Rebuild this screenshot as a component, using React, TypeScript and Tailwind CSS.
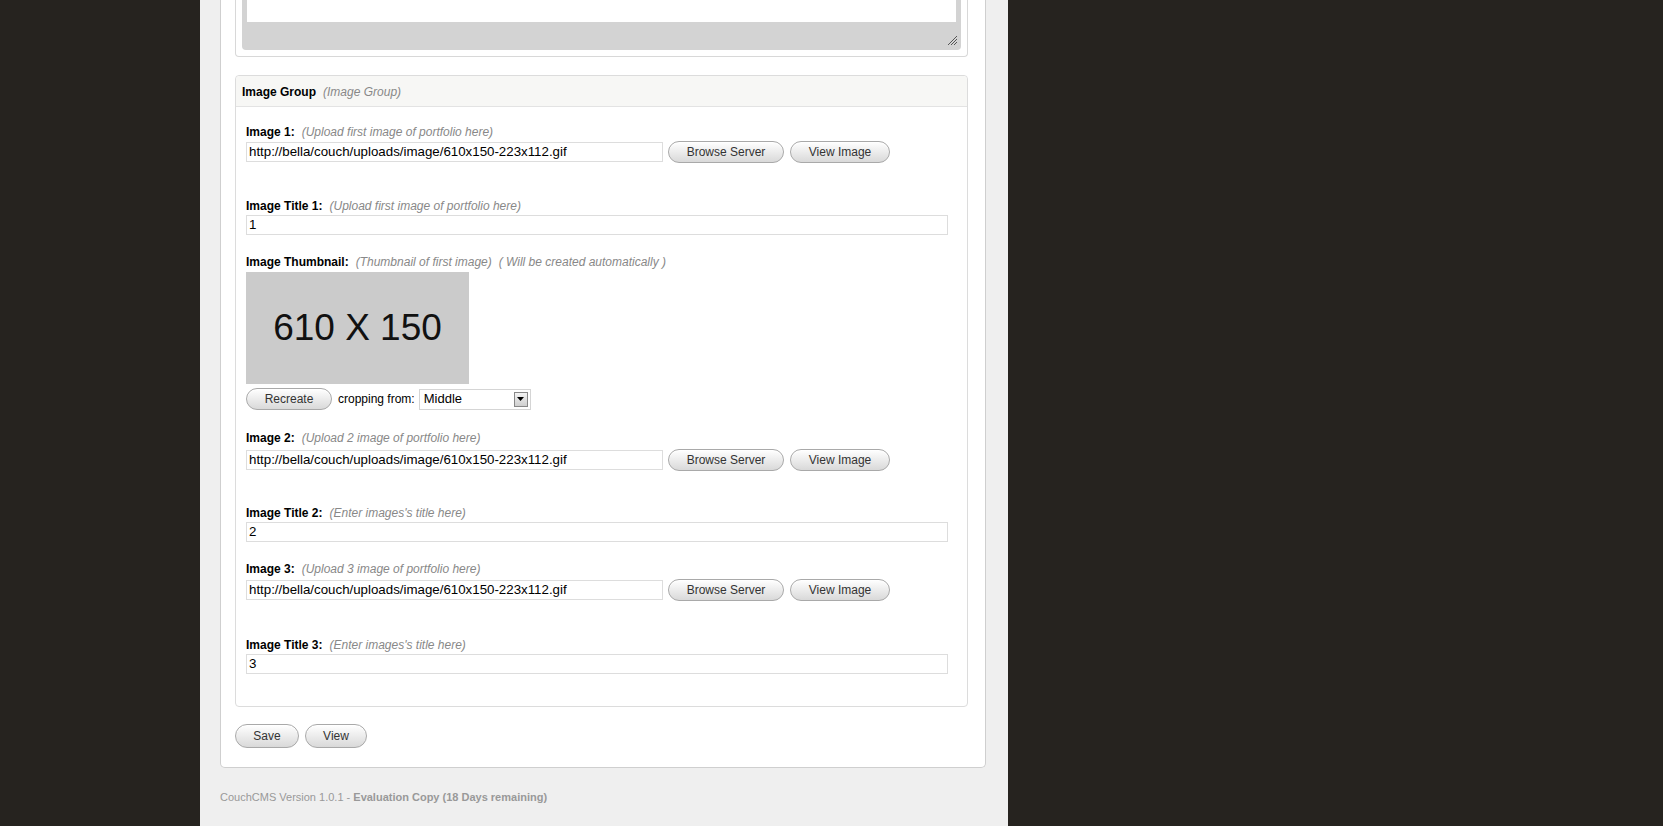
import React from 'react'

const URL_VALUE = 'http://bella/couch/uploads/image/610x150-223x112.gif'

function Btn({ label, w, h = 'h-[22px]' }: { label: string; w: string; h?: string }) {
  return (
    <button
      className={`${w} ${h} rounded-full border border-[#a9a9a9] bg-gradient-to-b from-[#ffffff] to-[#d9d9d9] text-[12px] text-[#333] shadow-[inset_0_1px_0_#fff] flex items-center justify-center`}
    >
      {label}
    </button>
  )
}

function Label({ name, hint, extra }: { name: string; hint: string; extra?: string }) {
  return (
    <div className="h-[16px] leading-[16px] text-[12px] flex items-center">
      <span className="font-bold text-black">{name}</span>
      <span className="italic text-[#888] ml-[7px]">{hint}</span>
      {extra && <span className="italic text-[#888] ml-[7px]">{extra}</span>}
    </div>
  )
}

function ImageRow({ mt }: { mt: string }) {
  return (
    <div className={`${mt} flex items-center h-[22px]`}>
      <div className="w-[417px] h-[20px] border border-[#ddd] bg-white px-[2px] text-[13.3px] leading-[18px] text-black">
        {URL_VALUE}
      </div>
      <div className="ml-[5px]">
        <Btn label="Browse Server" w="w-[116px]" />
      </div>
      <div className="ml-[6px]">
        <Btn label="View Image" w="w-[100px]" />
      </div>
    </div>
  )
}

function TitleInput({ value }: { value: string }) {
  return (
    <div className="mt-[1px] w-[702px] h-[20px] border border-[#ddd] bg-white px-[2px] text-[13.3px] leading-[18px] text-black">
      {value}
    </div>
  )
}

export default function App() {
  return (
    <div className="min-h-[826px] bg-[#26231f] font-['Liberation_Sans',Arial,sans-serif]">
      <div className="ml-[200px] w-[808px] min-h-[826px] bg-[#efefef]">
        <div className="mx-[20px] w-[766px] bg-white border-x border-b border-[#cfcfcf] rounded-b-[5px] pl-[14px] pb-[19px]">
          {/* textarea field, scrolled off top */}
          <div className="w-[733px] h-[57px] border-x border-b border-[#d8d8d8] rounded-b-[4px] px-[6px]">
            <div className="relative h-[50px] bg-[#d3d3d3] rounded-b-[4px] px-[5px]">
              <div className="h-[22px] bg-white" />
              <svg className="absolute right-[3px] bottom-[4px]" width="11" height="11" viewBox="0 0 11 11">
                <path d="M1 10 L10 1 M4 10 L10 4 M7 10 L10 7" stroke="#555" strokeWidth="1" />
              </svg>
            </div>
          </div>

          {/* Image group */}
          <div className="mt-[18px] w-[733px] border border-[#dcdcdc] rounded-[4px]">
            <div className="h-[31px] bg-[#f7f7f5] border-b border-[#e3e3e3] rounded-t-[4px] pl-[6px] pt-[1px] flex items-center text-[12px]">
              <span className="font-bold text-black">Image Group</span>
              <span className="italic text-[#888] ml-[7px]">(Image Group)</span>
            </div>
            <div className="pl-[10px] pt-[17px] pb-[32px]">
              <Label name="Image 1:" hint="(Upload first image of portfolio here)" />
              <ImageRow mt="mt-[1px]" />

              <div className="mt-[35px]">
                <Label name="Image Title 1:" hint="(Upload first image of portfolio here)" />
                <TitleInput value="1" />
              </div>

              <div className="mt-[19px]">
                <Label
                  name="Image Thumbnail:"
                  hint="(Thumbnail of first image)"
                  extra="( Will be created automatically )"
                />
                <div className="mt-[2px] w-[223px] h-[112px] bg-[#cbcbcb] flex items-center justify-center text-[37px] text-[#111]">
                  610 X 150
                </div>
                <div className="mt-[4px] flex items-center h-[22px]">
                  <Btn label="Recreate" w="w-[86px]" />
                  <span className="ml-[6px] text-[12px] text-black">cropping from:</span>
                  <div className="ml-[4px] w-[112px] h-[21px] border border-[#d5d5d5] bg-white flex items-center justify-between pl-[4px] pr-[2px]">
                    <span className="text-[13px] text-black">Middle</span>
                    <div className="w-[14px] h-[15px] border border-[#888] bg-gradient-to-b from-[#f4f4f4] to-[#cfcfcf] flex items-center justify-center">
                      <svg width="7" height="4" viewBox="0 0 7 4">
                        <path d="M0 0 L7 0 L3.5 4 Z" fill="#000" />
                      </svg>
                    </div>
                  </div>
                </div>
              </div>

              <div className="mt-[20px]">
                <Label name="Image 2:" hint="(Upload 2 image of portfolio here)" />
                <ImageRow mt="mt-[3px]" />
              </div>

              <div className="mt-[34px]">
                <Label name="Image Title 2:" hint="(Enter images's title here)" />
                <TitleInput value="2" />
              </div>

              <div className="mt-[19px]">
                <Label name="Image 3:" hint="(Upload 3 image of portfolio here)" />
                <ImageRow mt="mt-[2px]" />
              </div>

              <div className="mt-[36px]">
                <Label name="Image Title 3:" hint="(Enter images's title here)" />
                <TitleInput value="3" />
              </div>
            </div>
          </div>

          <div className="mt-[17px] flex gap-[6px]">
            <Btn label="Save" w="w-[64px]" h="h-[24px]" />
            <Btn label="View" w="w-[62px]" h="h-[24px]" />
          </div>
        </div>

        <div className="ml-[20px] mt-[21px] text-[11px] text-[#999]">
          CouchCMS Version 1.0.1 - <span className="font-bold text-[#999]">Evaluation Copy (18 Days remaining)</span>
        </div>
      </div>
    </div>
  )
}
